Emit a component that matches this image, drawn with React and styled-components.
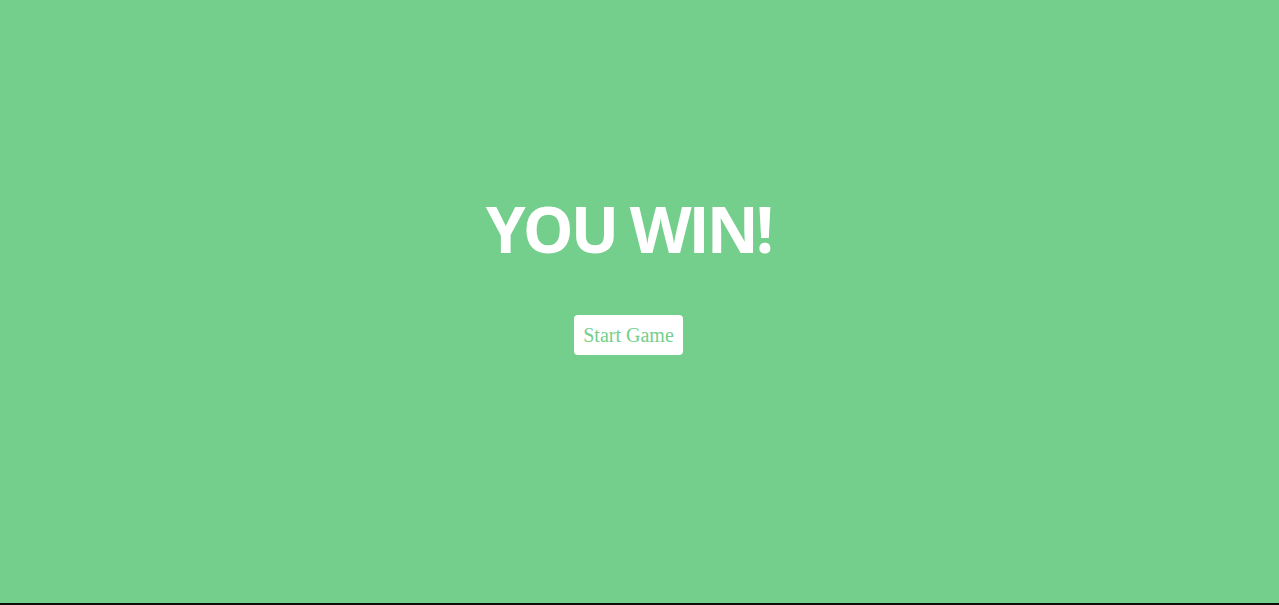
import React from "react";
import styled, { createGlobalStyle } from "styled-components";

const GlobalStyle = createGlobalStyle`
  html, body {
    margin: 0;
    padding: 0;
    background: #0d0d0d;
  }
`;

const Screen = styled.div`
  height: 603px;
  background-color: #74cf8c;
  display: flex;
  flex-direction: column;
  align-items: center;
  justify-content: center;
  padding: 0 22px 51px 0;
  box-sizing: border-box;
`;

const Title = styled.h1`
  margin: 0 0 54px;
  font-family: "Open Sans", sans-serif;
  font-weight: 700;
  font-size: 64px;
  letter-spacing: -3px;
  line-height: 1;
  color: #ffffff;
`;

const StartButton = styled.button`
  background: #ffffff;
  border: none;
  border-radius: 4px;
  padding: 0 9px;
  height: 40px;
  font-family: "Liberation Serif", serif;
  font-size: 20px;
  color: #74cf8c;
  cursor: pointer;
`;

const App = () => {
  return (
    <>
      <GlobalStyle />
      <Screen>
        <Title>YOU WIN!</Title>
        <StartButton>Start Game</StartButton>
      </Screen>
    </>
  );
};

export default App;
